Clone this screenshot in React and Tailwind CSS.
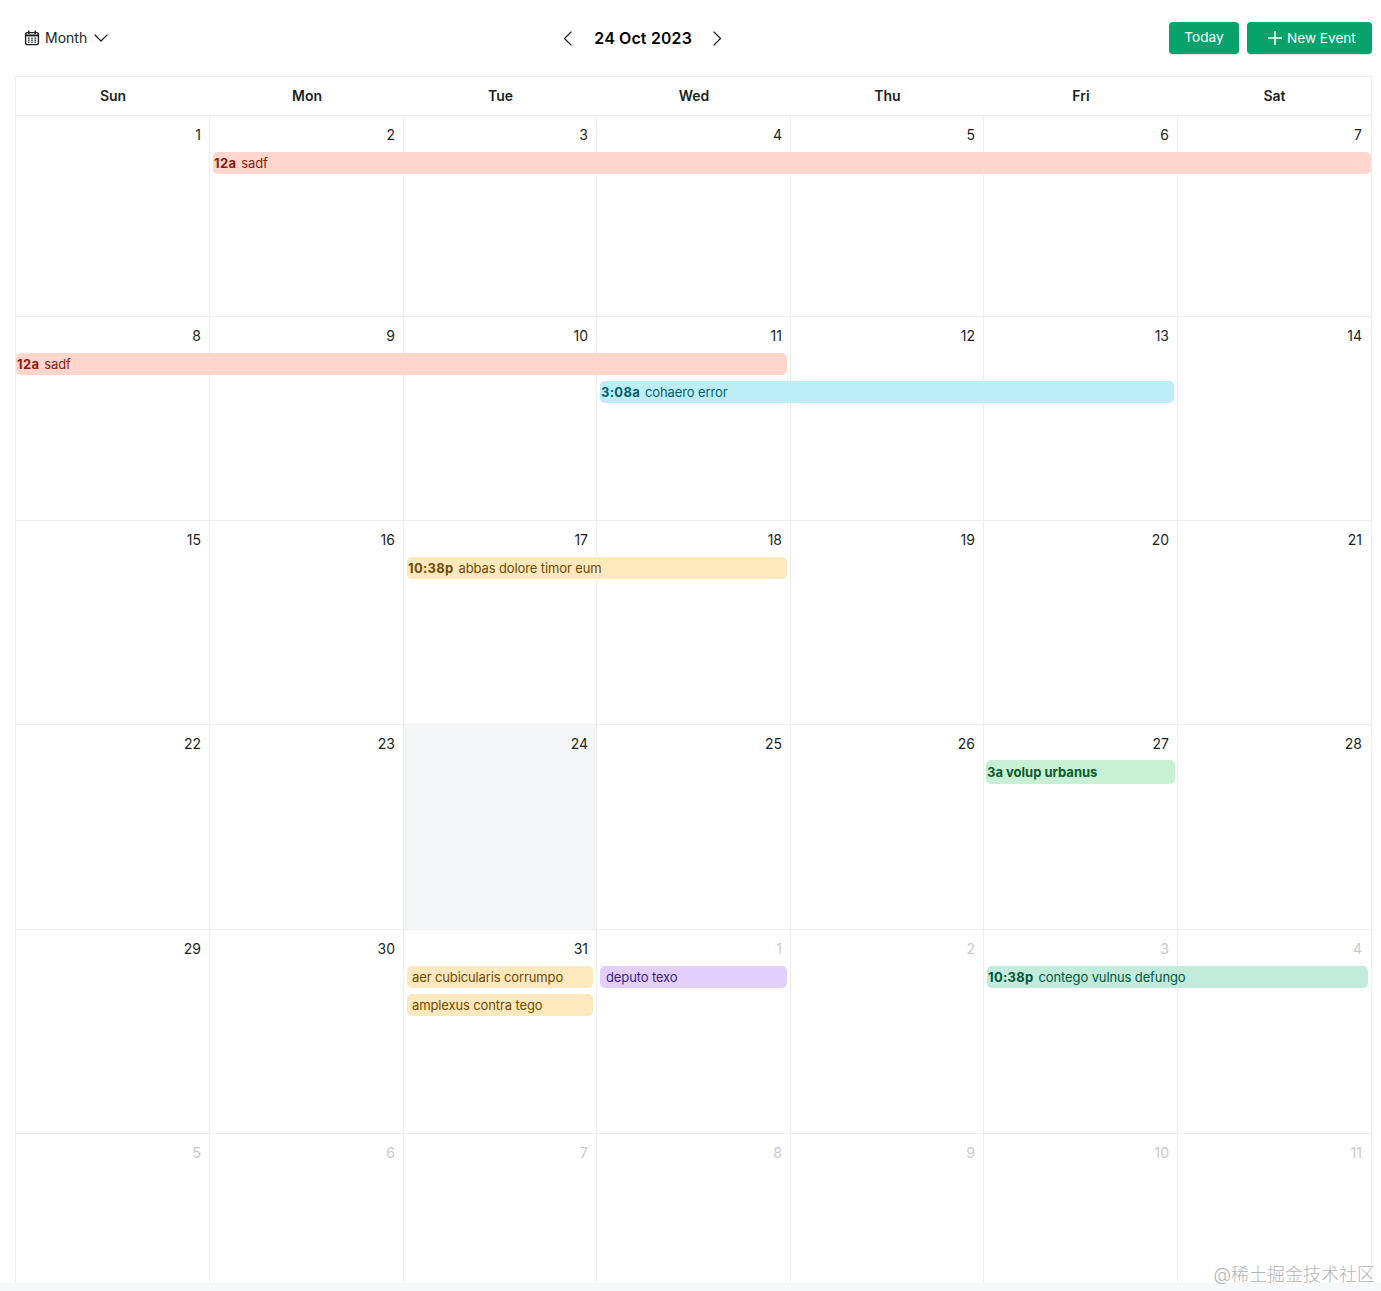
import React from 'react';

const weekdays = ['Sun', 'Mon', 'Tue', 'Wed', 'Thu', 'Fri', 'Sat'];

const weeks = [
  {
    height: 'h-[201px]',
    days: [1, 2, 3, 4, 5, 6, 7],
    events: [
      { time: '12a', title: 'sadf', place: 'col-start-2 col-span-6 ml-[3px] h-[22px]', tone: 'bg-[#fed6ce] text-[#8a1c10]', pad: 'pl-px' },
    ],
  },
  {
    height: 'h-[204px]',
    days: [8, 9, 10, 11, 12, 13, 14],
    events: [
      { time: '12a', title: 'sadf', place: 'col-start-1 col-span-4 mr-[4px] h-[22px]', tone: 'bg-[#fed6ce] text-[#8a1c10]', pad: 'pl-px' },
      { time: '3:08a', title: 'cohaero error', place: 'col-start-4 col-span-3 ml-[3px] mr-[4px] h-[22px]', tone: 'bg-[#bdeef6] text-[#025f6e]', pad: 'pl-px' },
    ],
  },
  {
    height: 'h-[204px]',
    days: [15, 16, 17, 18, 19, 20, 21],
    events: [
      { time: '10:38p', title: 'abbas dolore timor eum', place: 'col-start-3 col-span-2 ml-[3px] mr-[4px] h-[22px]', tone: 'bg-[#fee8bd] text-[#6f4a00]', pad: 'pl-px' },
    ],
  },
  {
    height: 'h-[205px]',
    today: 2,
    days: [22, 23, 24, 25, 26, 27, 28],
    numberRow: 'h-[35px]',
    events: [
      { title: '3a volup urbanus', bold: true, place: 'col-start-6 ml-[2px] mr-[3px] h-[24px]', tone: 'bg-[#c8f0d5] text-[#0d5a2c]', pad: 'pl-px' },
    ],
  },
  {
    height: 'h-[204px]',
    days: [29, 30, 31, 1, 2, 3, 4],
    outsideFrom: 3,
    events: [
      { title: 'aer cubicularis corrumpo', place: 'col-start-3 ml-[3px] mr-[4px] h-[22px]', tone: 'bg-[#fee8bd] text-[#6f4a00]', pad: 'pl-[5px]' },
      { title: 'deputo texo', place: 'col-start-4 row-start-2 ml-[3px] mr-[4px] h-[22px]', tone: 'bg-[#e3cffc] text-[#3f1b8c]', pad: 'pl-[6px]' },
      { time: '10:38p', title: 'contego vulnus defungo', place: 'col-start-6 col-span-2 row-start-2 ml-[3px] mr-[3px] h-[22px]', tone: 'bg-[#c1ebdb] text-[#04553c]', pad: 'pl-px' },
      { title: 'amplexus contra tego', place: 'col-start-3 row-start-3 ml-[3px] mr-[4px] h-[22px]', tone: 'bg-[#fee8bd] text-[#6f4a00]', pad: 'pl-[5px]' },
    ],
  },
  {
    height: 'h-[149px]',
    days: [5, 6, 7, 8, 9, 10, 11],
    outsideFrom: 0,
    last: true,
    events: [],
  },
];

function CalendarIcon() {
  return (
    <svg width="16" height="16" viewBox="0 0 16 16" fill="none" className="shrink-0">
      <rect x="1.6" y="2.6" width="12.8" height="12" rx="1.6" stroke="#1c1f23" strokeWidth="1.4" />
      <path d="M1.6 5.4h12.8" stroke="#1c1f23" strokeWidth="2" />
      <path d="M4.8 1v2.6M11.2 1v2.6" stroke="#1c1f23" strokeWidth="1.4" strokeLinecap="round" />
      <path d="M4 8.2h1.6M7.2 8.2h1.6M10.4 8.2H12M4 10.2h1.6M7.2 10.2h1.6M10.4 10.2H12M4 12.2h1.6M7.2 12.2h1.6M10.4 12.2H12" stroke="#1c1f23" strokeWidth="1.3" />
    </svg>
  );
}

function Chevron({ d, width, height }) {
  return (
    <svg width={width} height={height} viewBox={`0 0 ${width} ${height}`} fill="none" className="shrink-0">
      <path d={d} stroke="#1c1f23" strokeWidth="1.2" strokeLinecap="round" strokeLinejoin="round" />
    </svg>
  );
}

function EventBar({ event }) {
  return (
    <div className={`${event.place} ${event.tone} ${event.pad} flex items-center gap-[5px] rounded-[5px] text-[13px] leading-none whitespace-nowrap overflow-hidden`}>
      {event.time && <span className="font-bold tracking-[0.3px]">{event.time}</span>}
      <span className={event.bold ? 'font-bold' : 'tracking-[-0.12px]'}>{event.title}</span>
    </div>
  );
}

function Week({ week }) {
  return (
    <div className={`relative ${week.height} ${week.last ? '' : 'border-b border-[#eceef0]'}`}>
      <div className="absolute inset-0 grid grid-cols-[194px_194px_193px_194px_193px_194px_193px]">
        {week.days.map((day, index) => (
          <div
            key={index}
            className={`${index < 6 ? 'border-r border-[#eceef0]' : ''} ${week.today === index ? 'bg-[#f4f6f7]' : ''}`}
          />
        ))}
      </div>
      <div className="relative grid grid-cols-[194px_194px_193px_194px_193px_194px_193px] gap-y-[6px]">
        <div className={`col-span-7 grid grid-cols-[194px_194px_193px_194px_193px_194px_193px] -mb-[6px] ${week.numberRow || 'h-[36px]'}`}>
          {week.days.map((day, index) => (
            <div
              key={index}
              className={`pt-[9px] pr-[9px] text-right text-[14px] leading-[20px] ${week.outsideFrom !== undefined && index >= week.outsideFrom ? 'text-[#c6cacd]' : 'text-[#1c1f23]'}`}
            >
              {day}
            </div>
          ))}
        </div>
        {week.events.map((event) => (
          <EventBar key={event.title} event={event} />
        ))}
      </div>
    </div>
  );
}

export default function App() {
  return (
    <div className="relative h-[1291px] overflow-hidden bg-white font-['Inter','Noto_Sans_CJK_SC',sans-serif] text-[#1c1f23]">
      <header className="flex h-[76px] items-center justify-between pl-[15px] pr-[9px]">
        <button className="flex items-center pl-[9px] pr-[8px] text-[14px] leading-[20px] -mt-px">
          <CalendarIcon />
          <span className="ml-[5px]">Month</span>
          <span className="ml-[7px]">
            <Chevron width={14} height={8} d="M1 1l6 6 6-6" />
          </span>
        </button>
        <div className="flex items-center">
          <Chevron width={9} height={15} d="M8 1L1.5 7.5 8 14" />
          <span className="ml-[22px] mr-[21px] text-[16px] font-semibold tabular-nums text-black">24 Oct 2023</span>
          <Chevron width={9} height={15} d="M1 1l6.5 6.5L1 14" />
        </div>
        <div className="flex items-center gap-[8px]">
          <button className="flex h-[32px] w-[70px] items-center justify-center rounded-[4px] bg-[#07a36b] pb-[2px] text-[13.6px] text-white shadow-[0_1px_0_#d5efe5]">
            Today
          </button>
          <button className="flex h-[32px] w-[125px] items-center gap-[4px] rounded-[4px] bg-[#07a36b] pl-[20px] text-[13.6px] text-white shadow-[0_1px_0_#d5efe5]">
            <svg width="16" height="16" viewBox="0 0 16 16" fill="none" className="shrink-0">
              <path d="M8 1v14M1 8h14" stroke="#fff" strokeWidth="1.5" />
            </svg>
            New Event
          </button>
        </div>
      </header>

      <div className="ml-[15px] w-[1357px] border-x border-t border-[#eceef0]">
        <div className="grid h-[39px] grid-cols-[194px_194px_193px_194px_193px_194px_193px] border-b border-[#eceef0]">
          {weekdays.map((name) => (
            <div key={name} className="flex items-center justify-center pb-[2px] text-[14px] font-semibold">
              {name}
            </div>
          ))}
        </div>
        {weeks.map((week) => (
          <Week key={week.days[0]} week={week} />
        ))}
      </div>

      <div className="h-[8px] bg-[#f7f8f9]" />

      <span className="absolute bottom-[4px] right-[6px] text-[18px] font-light leading-[24px] text-[#b4b4b4]">
        @稀土掘金技术社区
      </span>
    </div>
  );
}
